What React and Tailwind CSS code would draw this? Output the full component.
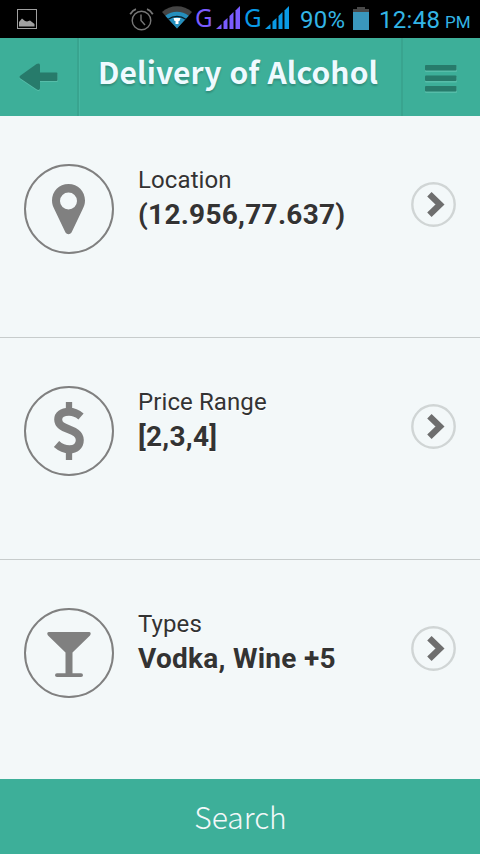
import React from "react";

const filters = [
  { label: "Location", value: "(12.956,77.637)", icon: "pin" },
  { label: "Price Range", value: "[2,3,4]", icon: "dollar" },
  { label: "Types", value: "Vodka, Wine +5", icon: "glass" },
];

const Signal = () => (
  <svg width="24" height="24" viewBox="0 0 24 24" fill="currentColor">
    <path d="M0 23L5.5 18V23Z" />
    <path d="M7.5 15.5L11.5 12V23H7.5Z" />
    <path d="M13.5 10L17.5 6V23H13.5Z" />
    <path d="M19.5 4.5L24 0V23H19.5Z" />
  </svg>
);

const StatusBar = () => (
  <div className="flex h-[38px] shrink-0 items-start whitespace-nowrap bg-black font-['Roboto',sans-serif] text-[#33b5e5]">
    <svg className="ml-[17px] mt-[9px] shrink-0" width="20" height="20" viewBox="0 0 20 20">
      <rect x="0.5" y="0.5" width="19" height="19" fill="none" stroke="#a0a0a0" />
      <path
        d="M2 17.5V13L5 9.5L8 12L10 12.5L13 11.5L17.5 15V17.5Z"
        fill="#a0a0a0"
      />
    </svg>
    <svg
      className="ml-[92px] mt-[7px] shrink-0"
      width="26"
      height="25"
      viewBox="0 0 26 25"
      fill="none"
      stroke="#777777"
      strokeWidth="1.4"
    >
      <circle cx="12.5" cy="13.5" r="9.3" />
      <path d="M12 7.5V13.5L16 18" />
      <path d="M1.2 7.2C2.5 4.8 4 3.2 7 2.2M23.8 7.2C22.5 4.8 21 3.2 18 2.2" strokeWidth="1.8" />
    </svg>
    <svg className="ml-[7px] mt-[6px] shrink-0" width="30" height="23" viewBox="0 0 30 23">
      <path d="M15 22.5L0 6C8 -1.7 22 -1.7 30 6Z" fill="#444444" />
      <path d="M15 22.5L3.3 9.7C10 4.3 20 4.3 26.7 9.7Z" fill="#258fbd" />
      <path d="M6.2 13.2C11.5 9.3 18.5 9.3 23.8 13.2" fill="none" stroke="#0a1a22" strokeWidth="1.2" />
      <path d="M11.5 12H18.5L17.5 15H16.5V18H13.5V15H12.5Z" fill="#ffffff" />
    </svg>
    <span className="ml-[3px] w-[18px] origin-left scale-x-[0.93] font-['Noto_Sans',sans-serif] text-[26px] leading-[35px] text-[#7a5cff]">
      G
    </span>
    <span className="ml-[3px] mt-[6px] text-[#7a5cff]">
      <Signal />
    </span>
    <span className="ml-[4px] w-[18px] origin-left scale-x-[0.93] font-['Noto_Sans',sans-serif] text-[26px] leading-[35px] text-[#0a9ae6]">
      G
    </span>
    <span className="ml-[3px] mt-[6px] text-[#0a9ae6]">
      <Signal />
    </span>
    <span className="ml-[11px] mt-[6px] w-[53px] text-[24px] leading-[28px] tracking-[0.3px]">
      90%
    </span>
    <svg className="mt-[6px] shrink-0" width="16" height="24" viewBox="0 0 16 24">
      <path d="M4 1H12V3H16V6H0V3H4Z" fill="#484848" />
      <rect y="6" width="16" height="18" fill="#3a97bd" />
    </svg>
    <span className="ml-[10px] mt-[6px] w-[66px] text-[24px] leading-[28px] tracking-[0.3px]">
      12:48
    </span>
    <span className="mt-[9px] text-[17px] leading-[26px]">PM</span>
  </div>
);

const Header = () => (
  <header className="flex h-[78px] shrink-0 bg-[#3daf99]">
    <button className="flex w-[79px] items-start border-r-2 border-[#39a48f] pl-[19px] pt-[24px]">
      <svg width="40" height="30" viewBox="0 0 40 30">
        <path
          d="M1.5 14.5L17.5 2.3C19.5 1.1 21 1.7 21 3.5V11H37.5Q39 11 39 12.5V18.5Q39 20 37.5 20H21V27C21 29 19.5 29.5 17.5 28.3L1.5 17.5Q-0.5 16 1.5 14.5Z"
          fill="#56bda9"
        />
        <path
          d="M1.5 13.5L17.5 2C19.5 0.8 21 1.4 21 3.2V10.5H37.5Q38.5 10.5 38.5 11.5V18Q38.5 19 37.5 19H21V26C21 28 19.5 28.5 17.5 27.3L1.5 16.5Q-0.5 15 1.5 13.5Z"
          fill="#277b6b"
        />
      </svg>
    </button>
    <h1 className="w-[322px] whitespace-nowrap border-l border-[#45b6a1] pl-[18px] pt-[13px] font-['Noto_Sans_CJK_JP',sans-serif] text-[30px] font-bold leading-[40px] tracking-[0.12px] [word-spacing:1px] text-[#effaff] [text-shadow:0_2px_2px_rgba(0,0,0,0.2)]">
      Delivery of Alcohol
    </h1>
    <button className="flex w-[79px] items-start border-l-2 border-[#39a48f] pl-[22px] pt-[27px]">
      <svg width="32" height="28" viewBox="0 0 32 28">
        <rect y="1" width="32" height="6" rx="1" fill="#56bda9" />
        <rect y="11.5" width="32" height="6" rx="1" fill="#56bda9" />
        <rect y="22" width="32" height="6" rx="1" fill="#56bda9" />
        <rect y="0" width="31.5" height="5.5" rx="1" fill="#277b6b" />
        <rect y="10.5" width="31.5" height="5.5" rx="1" fill="#277b6b" />
        <rect y="21" width="31.5" height="5.5" rx="1" fill="#277b6b" />
      </svg>
    </button>
  </header>
);

const FilterIcon = ({ name }) => (
  <svg className="shrink-0" width="90" height="90" viewBox="0 0 90 90">
    <circle cx="45" cy="45" r="44" fill="none" stroke="#808080" strokeWidth="2" />
    {name === "pin" && (
      <path
        fillRule="evenodd"
        d="M44.5 20C35 20 28 27.3 28 36.5C28 40 29 42.5 30.5 45.5L41 67.5C42.5 71 46.5 71 48 67.5L58.5 45.5C60 42.5 61 40 61 36.5C61 27.3 54 20 44.5 20ZM44.5 28.5A8.5 8.5 0 1 1 44.5 45.5A8.5 8.5 0 1 1 44.5 28.5Z"
        fill="#808080"
      />
    )}
    {name === "dollar" && (
      <g fill="none" stroke="#808080">
        <path
          d="M57 30.5C53.5 27.5 49.5 25.8 45 25.8C38 25.8 34.2 29 34.2 33.5C34.2 45 55.8 41.5 55.8 54C55.8 60 51.5 63.3 45.5 63.3C40.5 63.3 36.5 61.5 32.5 58"
          strokeWidth="8"
        />
        <path d="M45 16V24M45 64V74" strokeWidth="6.3" />
      </g>
    )}
    {name === "glass" && (
      <path
        d="M25 24H65C67 24 67.2 26 66 27.5L48.5 44.5V65.3H57Q59 65.3 59 67.3Q59 69 57 69H33Q31 69 31 67.3Q31 65.3 33 65.3H41.5V44.5L24 27.5C22.8 26 23 24 25 24Z"
        fill="#808080"
      />
    )}
  </svg>
);

const FilterRow = ({ label, value, icon }) => (
  <div className="flex h-[222px] items-start border-b border-[#c7cccc] px-6 last:h-[219px] last:border-b-0">
    <div className="pt-12">
      <FilterIcon name={icon} />
    </div>
    <div className="flex-1 whitespace-nowrap pl-6 pt-[48px] text-[#333333] [text-shadow:0_1px_0_#ffffff]">
      <p className="text-[24px] leading-[32px] tracking-[0.1px]">{label}</p>
      <p className="pt-px text-[28px] font-bold leading-[36px] tracking-[0.27px]">{value}</p>
    </div>
    <svg className="mt-[66px] shrink-0" width="45" height="45" viewBox="0 0 45 45">
      <circle cx="22.5" cy="22.5" r="21.2" fill="none" stroke="#d0d5d5" strokeWidth="2.4" />
      <path d="M18.4 12.2L29 22.5L18.4 32.8" fill="none" stroke="#6e6e6e" strokeWidth="6.3" />
    </svg>
  </div>
);

const App = () => {
  return (
    <div className="flex h-[854px] w-[480px] flex-col bg-[#f3f8f9] font-['Roboto',sans-serif]">
      <StatusBar />
      <Header />

      {/* Filters */}
      <main className="h-[663px] shrink-0">
        {filters.map((filter) => (
          <FilterRow key={filter.label} {...filter} />
        ))}
      </main>

      <button className="h-[75px] shrink-0 bg-[#3daf99] pb-px pl-px font-['Noto_Sans_CJK_SC',sans-serif] text-[30px] font-light text-[#f3f8f9]">
        Search
      </button>
    </div>
  );
};

export default App;
